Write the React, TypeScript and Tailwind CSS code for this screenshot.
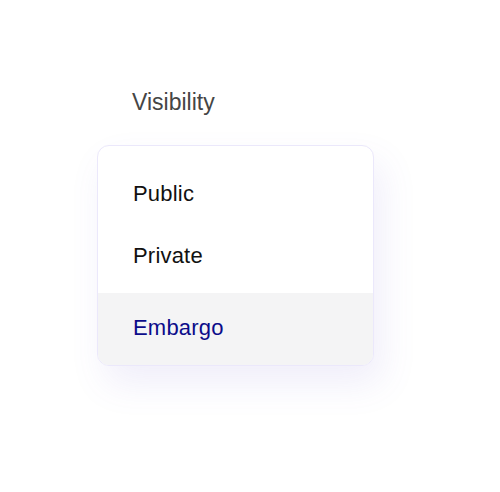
const options = [
  { label: "Public", active: false },
  { label: "Private", active: false },
];

export default function App() {
  return (
    <div className="w-[500px] h-[492px] bg-white pt-[88px] pl-[97px] font-['Liberation_Sans',Arial,sans-serif]">
      <h2 className="pl-[35px] text-[23px] leading-[28px] text-[#454545] mb-[29px]">Visibility</h2>

      <div className="w-[277px] rounded-[12px] border border-[#ebe8fb] bg-white overflow-hidden shadow-[8px_18px_36px_rgba(110,90,210,0.10)]">
        <div className="pt-[16px] pb-[7px]">
          {options.map((o) => (
            <div key={o.label} className="h-[62px] flex items-center pl-[35px] text-[22px] tracking-[0.2px] text-[#111111]">
              {o.label}
            </div>
          ))}
        </div>
        <div className="bg-[#f4f4f5] pt-[3px] pb-[7px]">
          <div className="h-[62px] flex items-center pl-[35px] text-[22px] tracking-[0.2px] text-[#0c0c8a]">Embargo</div>
        </div>
      </div>
    </div>
  );
}
